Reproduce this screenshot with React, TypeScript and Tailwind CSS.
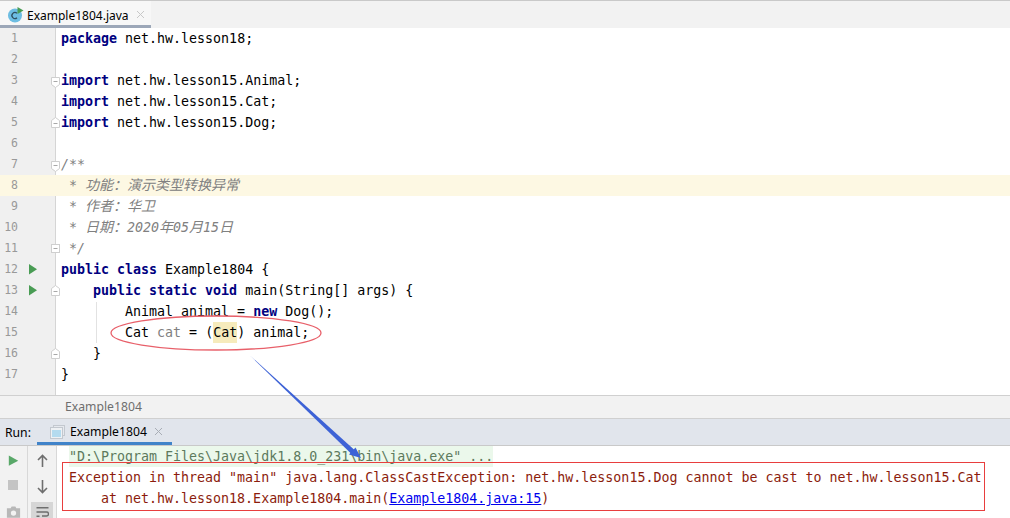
const mono = "font-['DejaVu_Sans_Mono','Noto_Sans_CJK_SC',monospace]";

function Kw({ children }: { children: React.ReactNode }) {
  return <span className="font-bold text-[#000080]">{children}</span>;
}
function Cjk({ children }: { children: React.ReactNode }) {
  return <span className="text-[14px]">{children}</span>;
}

const Fold = ({ dir }: { dir: "down" | "up" | "none" }) => (
  <svg
    width="11"
    height="13"
    viewBox="0 0 11 13"
    className={`absolute left-[50px] ${dir === "down" ? "top-[6px]" : dir === "up" ? "top-[4px]" : "top-[5px]"}`}
  >
    {dir === "down" && <path d="M1.500 1.500h8v7l-4 3-4-3z" fill="#fff" stroke="#cfcfcf" />}
    {dir === "up" && <path d="M1.500 11.500h8v-7l-4-3-4 3z" fill="#fff" stroke="#cfcfcf" />}
    {dir === "none" && <rect x="1.500" y="1.500" width="8" height="8" fill="#fff" stroke="#cfcfcf" />}
    <path d={dir === "none" ? "M3.500 5.500h4" : dir === "up" ? "M3.500 7.500h4" : "M3.500 5.500h4"} stroke="#a8a8a8" />
  </svg>
);

const Run = () => (
  <svg width="10" height="11" viewBox="0 0 10 11" className="absolute left-[28px] top-[5px]">
    <path d="M1 0l8 5.250-8 5.250z" fill="#499c54" />
  </svg>
);

type Line = { c?: React.ReactNode; f?: "down" | "up" | "none"; run?: boolean; hl?: boolean };

const lines: Line[] = [
  { c: <><Kw>package</Kw> net.hw.lesson18;</> },
  {},
  { c: <><Kw>import</Kw> net.hw.lesson15.Animal;</>, f: "down" },
  { c: <><Kw>import</Kw> net.hw.lesson15.Cat;</> },
  { c: <><Kw>import</Kw> net.hw.lesson15.Dog;</>, f: "up" },
  {},
  { c: <span className="italic text-[#808080]">/**</span>, f: "down" },
  { c: <span className="italic text-[#808080]">{" * "}<Cjk>功能：演示类型转换异常</Cjk></span>, hl: true },
  { c: <span className="italic text-[#808080]">{" * "}<Cjk>作者：华卫</Cjk></span> },
  { c: <span className="italic text-[#808080]">{" * "}<Cjk>日期：</Cjk>2020<Cjk>年</Cjk>05<Cjk>月</Cjk>15<Cjk>日</Cjk></span> },
  { c: <span className="italic text-[#808080]">{" */"}</span>, f: "none" },
  { c: <><Kw>public class</Kw> Example1804 {"{"}</>, run: true },
  { c: <>{"    "}<Kw>public static void</Kw> main(String[] args) {"{"}</>, run: true, f: "up" },
  { c: <>{"        "}Animal animal = <Kw>new</Kw> Dog();</> },
  { c: <>{"        "}Cat <span className="text-[#808080]">cat</span> = (<span className="inline-block h-[21px] bg-[#f6ebbc]">Cat</span>) animal;</> },
  { c: <>{"    }"}</>, f: "up" },
  { c: <>{"}"}</> },
];

export default function App() {
  return (
    <div className={`relative flex h-[518px] w-[1010px] flex-col overflow-hidden bg-white ${mono} text-[13.31px] text-black`}>
      {/* tab bar */}
      <div className="flex h-[28px] shrink-0 border-t border-[#c9c9c9] bg-[#f2f2f2]">
        <div className="flex w-[151px] items-center border-b-[3px] border-[#9ca7b8] bg-[#f7f7f7] pl-[8px] pt-[3px] font-['Noto_Sans',sans-serif] text-[12px]">
          <svg width="16" height="16" viewBox="0 0 16 16" className="shrink-0">
            <circle cx="7" cy="8.500" r="7" fill="#6dbde2" />
            <path d="M9 6.300a3 3 0 1 0 0 4.400" fill="none" stroke="#2f4f5f" strokeWidth="1.300" />
            <path d="M9.500 0l6 3.500-6 3.500z" fill="#499c54" />
          </svg>
          <span className="ml-[3px] mt-[2px]">Example1804.java</span>
          <svg width="9" height="9" viewBox="0 0 9 9" className="ml-[7px]">
            <path d="M1 1l7 7M8 1l-7 7" stroke="#c8c8c8" />
          </svg>
        </div>
      </div>

      {/* editor */}
      <div className="relative h-[367px] shrink-0 bg-white">
        <div className="absolute bottom-0 left-0 top-0 w-[56px] border-r border-[#d5d5d5] bg-[#f0f0f0]" />
        <div className="absolute bottom-[52px] left-[96px] h-[41px] w-px bg-[#e2e2e2]" />
        <div className="relative">
          {lines.map((l, i) => (
            <div key={i} className={`relative flex h-[21px] leading-[21px] ${l.hl ? "bg-[#fdf8e3]" : ""}`}>
              <span className="w-[56px] shrink-0 pr-[38px] text-right text-[11.5px] text-[#999999]">{i + 1}</span>
              <span className="whitespace-pre pl-[5px]">{l.c}</span>
              {l.run && <Run />}
              {l.f && <Fold dir={l.f} />}
            </div>
          ))}
        </div>
      </div>

      {/* breadcrumb */}
      <div className="flex h-[24px] shrink-0 items-center border-t border-b border-[#d0d0d0] bg-[#f2f2f2] pl-[65px] font-['Noto_Sans',sans-serif] text-[12.2px] text-[#6e6e6e]">
        Example1804
      </div>

      {/* run tabs */}
      <div className="flex h-[27px] shrink-0 items-stretch border-b border-[#c9c9c9] bg-[#e1e5ec] font-['Noto_Sans',sans-serif] text-[12.2px]">
        <span className="flex w-[37px] items-center pl-[5px] pt-[2px]">Run:</span>
        <div className="flex w-[135px] items-center border-b-[3px] border-[#4083c9] pl-[13px] pt-[2px]">
          <svg width="15" height="14" viewBox="0 0 15 14" className="shrink-0">
            <rect x="3.500" y="0.500" width="11" height="10" fill="#e6e9ee" stroke="#c3c8cf" />
            <rect x="0.500" y="2.500" width="12" height="11" fill="#eef1f4" stroke="#c3c8cf" />
            <rect x="2" y="5" width="9" height="7" fill="#b4dbef" />
          </svg>
          <span className="ml-[5px] mt-[2px]">Example1804</span>
          <svg width="9" height="9" viewBox="0 0 9 9" className="ml-[7px]">
            <path d="M1 1l7 7M8 1l-7 7" stroke="#a8adb5" />
          </svg>
        </div>
      </div>

      {/* console */}
      <div className="flex min-h-0 flex-1">
        <div className="flex w-[28px] shrink-0 flex-col items-center border-r border-[#d8d8d8] bg-[#f2f2f2] pt-[9px]">
          <svg width="11" height="12" viewBox="0 0 11 12" className="mr-[1px]"><path d="M0.500 0.500l10 5.500-10 5.500z" fill="#59a869" /></svg>
          <div className="mr-[1px] mt-[14px] h-[10px] w-[10px] bg-[#c4c4c4]" />
          <svg width="15" height="13" viewBox="0 0 15 13" className="mt-[16px]"><path d="M0.500 2.500h4l1-2h4l1 2h4v10h-14z" fill="#b8b8b8" /><circle cx="7.500" cy="7.500" r="2.800" fill="#f2f2f2" /></svg>
        </div>
        <div className="flex w-[29px] shrink-0 flex-col items-center border-r border-[#d8d8d8] bg-[#f2f2f2] pt-[8px]">
          <svg width="11" height="13" viewBox="0 0 11 13" className="mb-[13px]"><path d="M5.500 13V1.500M1 6l4.500-4.500L10 6" fill="none" stroke="#6e6e6e" strokeWidth="1.600" /></svg>
          <svg width="11" height="14" viewBox="0 0 11 14"><path d="M5.500 0v12M1 8l4.500 4.500L10 8" fill="none" stroke="#6e6e6e" strokeWidth="1.600" /></svg>
          <div className="mt-[8px] flex h-[16px] w-[22px] shrink-0 justify-center bg-[#d6d6d6] pt-[5px]">
            <svg width="13" height="11" viewBox="0 0 13 11"><path d="M0.500 0.700h12M0.500 5h10a2 2 0 0 1 0 4H6M0.500 9.300h3" fill="none" stroke="#6e6e6e" strokeWidth="1.400" /></svg>
          </div>
        </div>
        <div className="min-w-0 flex-1 leading-[21px]">
          <div className="ml-[12px] h-[21px] w-[424px] whitespace-pre bg-[#ebf8eb] text-[#5d7a5d]">"D:\Program Files\Java\jdk1.8.0_231\bin\java.exe" ...</div>
          <div className="ml-[12px] h-[21px] whitespace-pre text-[#8c1c0c]">Exception in thread "main" java.lang.ClassCastException: net.hw.lesson15.Dog cannot be cast to net.hw.lesson15.Cat</div>
          <div className="ml-[12px] h-[21px] whitespace-pre text-[#8c1c0c]">{"    at net.hw.lesson18.Example1804.main("}<span className="text-[#0000ee] underline">Example1804.java:15</span>)</div>
        </div>
      </div>

      {/* annotations drawn over the screenshot */}
      <div className="absolute left-[62px] top-[462px] h-[49px] w-[923px] border border-[#e83e3e]" />
      <svg width="1010" height="518" className="pointer-events-none absolute left-0 top-0">
        <ellipse cx="216" cy="333" rx="105" ry="17" fill="none" stroke="#e8606a" strokeWidth="1.300" />
        <path d="M250 355.500L351.500 454l3-4z" fill="#3d62d6" />
        <path d="M361 458l-12-3.500 6.500-7z" fill="#3d62d6" />
      </svg>
    </div>
  );
}
